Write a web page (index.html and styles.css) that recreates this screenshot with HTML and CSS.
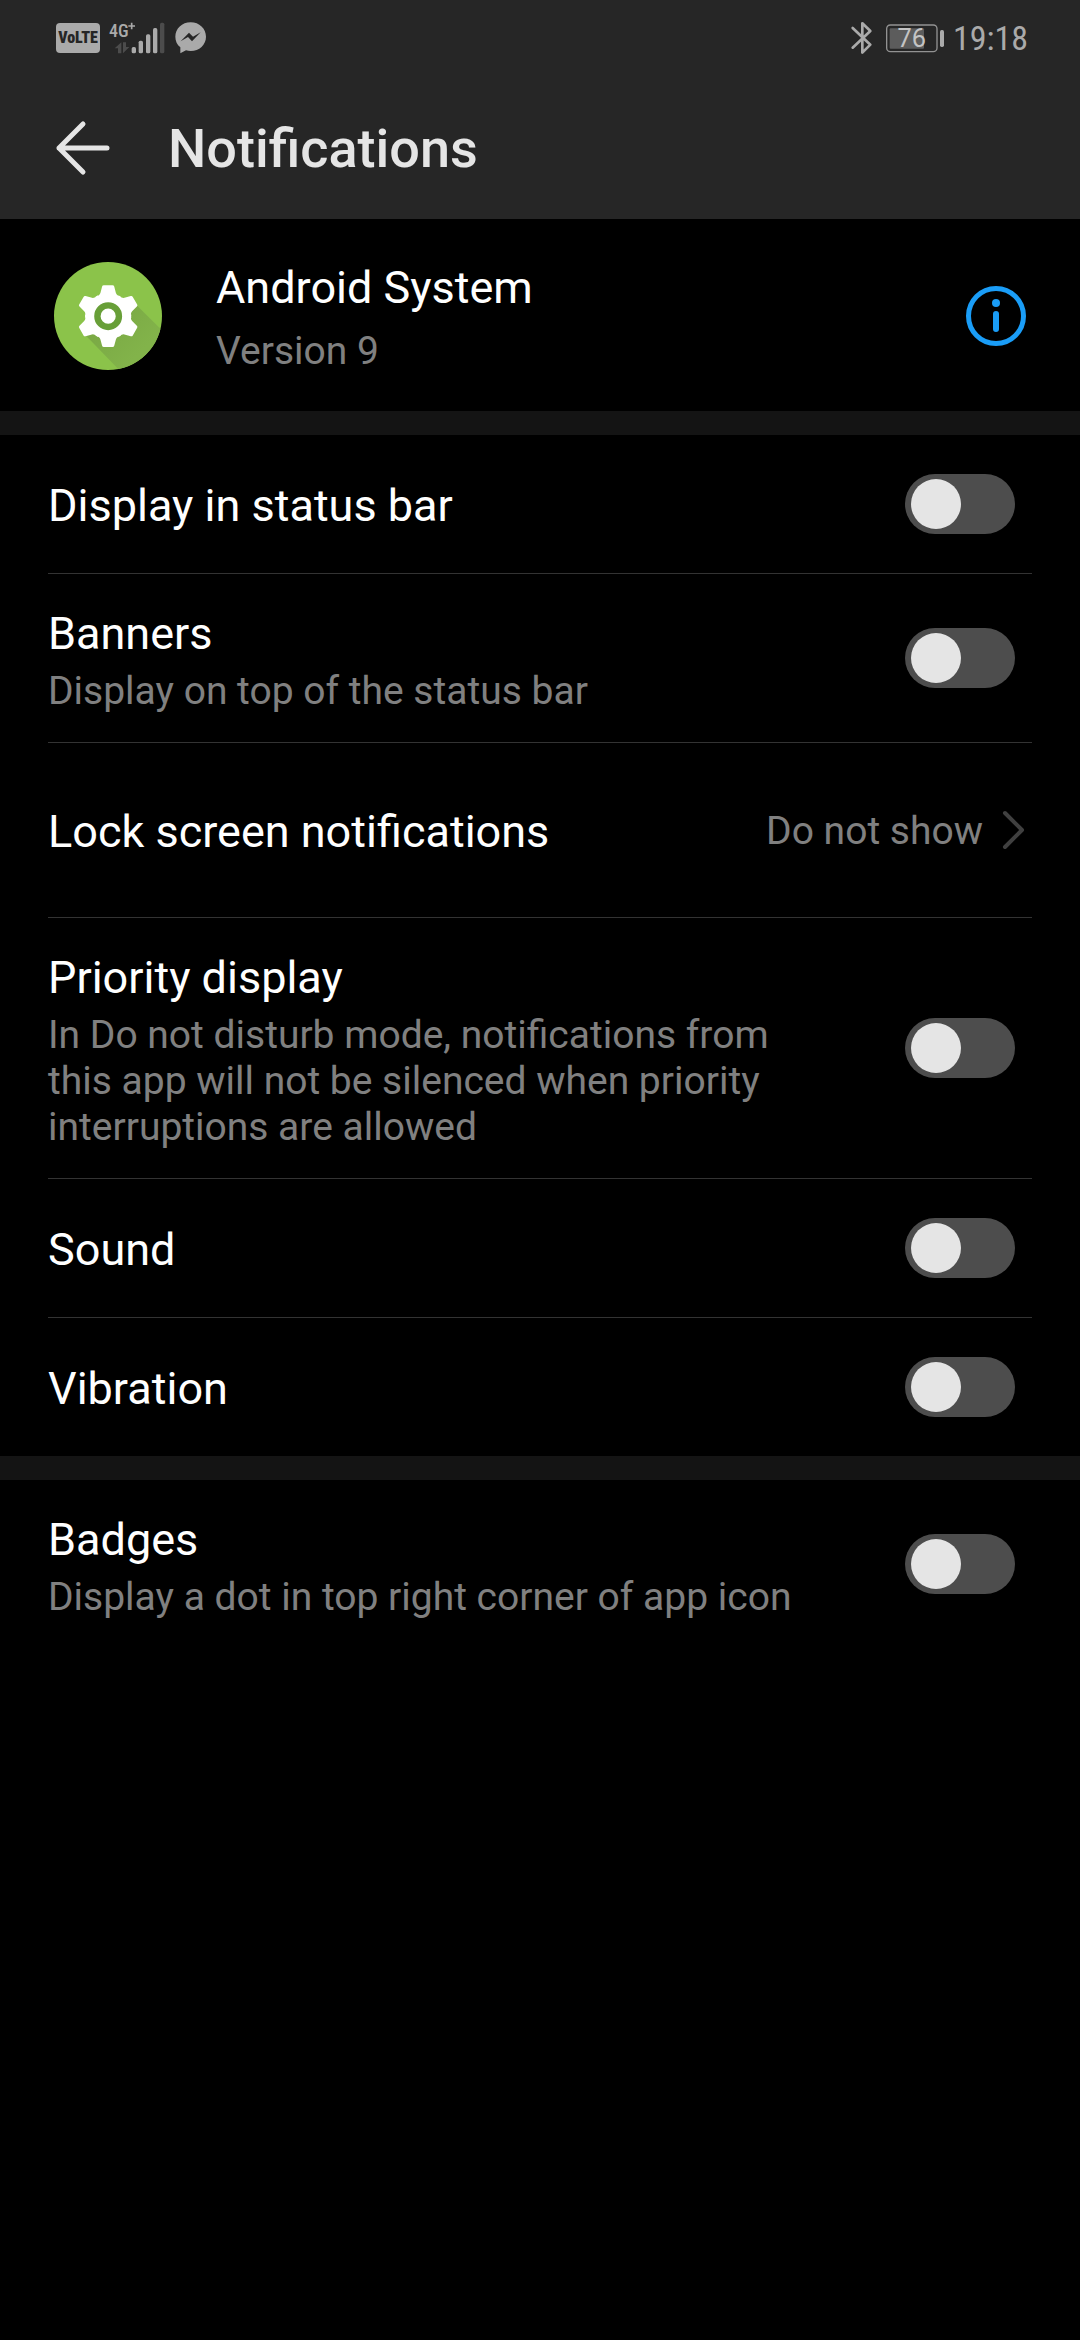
FILE: index.html
```html
<!DOCTYPE html>
<html lang="en">
<head>
<meta charset="utf-8">
<meta name="viewport" content="width=device-width">
<title>Notifications</title>
<link rel="stylesheet" href="styles.css">
</head>
<body>
<header class="top">
  <div class="status">
    <div class="status-left">
      <span class="volte">VoLTE</span>
      <svg class="signal" viewBox="204 54 171 114" aria-label="4G+ signal">
        <text class="network" x="207" y="107">4G</text>
        <path d="M265 75h20M275 65v20" stroke="#aaa" stroke-width="5"/>
        <g fill="#aaa">
          <rect x="275" y="138" width="13" height="19" rx="5"/>
          <rect x="296" y="119" width="13" height="38" rx="5"/>
          <rect x="318" y="100" width="13" height="57" rx="5"/>
          <rect x="339" y="81" width="13" height="76" rx="5"/>
        </g>
        <rect x="360" y="65" width="13" height="92" rx="5" fill="#4c4c4c"/>
        <path fill="#4c4c4c" d="M234 157V142H224L244 124V157ZM249 124H258V138H268L249 157Z"/>
      </svg>
      <svg class="messenger" viewBox="405 68 93 96" aria-label="Messenger">
        <path fill="#aaa" d="M452 69c-26 0-46 19-46 43 0 13 5 24 15 32v18l17-9c5 1 9 2 14 2 26 0 46-19 46-43s-20-43-46-43z"/>
        <path fill="#262626" d="M422 126l25-26 12 12 23-13-26 27-12-13z"/>
      </svg>
    </div>
    <div class="status-right">
      <svg class="bluetooth" viewBox="60 60 63 102" aria-label="Bluetooth">
        <path fill="none" stroke="#aaa" stroke-width="8" stroke-linecap="round" stroke-linejoin="round" d="M65 81l53 50-24 24V67l24 23-53 50"/>
      </svg>
      <svg class="battery" viewBox="165 63 174 96" aria-label="Battery 76 percent">
        <rect x="167" y="72" width="151" height="80" rx="11" fill="none" stroke="#929292" stroke-width="4"/>
        <rect x="176" y="82" width="103" height="61" rx="3" fill="#5c5c5c"/>
        <rect x="327" y="87" width="12" height="51" rx="5" fill="#aaa"/>
        <text class="charge" x="242" y="138">76</text>
      </svg>
      <time class="clock">19:18</time>
    </div>
  </div>
  <div class="appbar">
    <button class="icon-button" type="button" aria-label="Back">
      <svg class="back" viewBox="0 0 54 54"><path d="M27 3L3 27l24 24M3 27h48"/></svg>
    </button>
    <h1 class="heading">Notifications</h1>
  </div>
</header>
<main>
  <section class="app">
    <svg class="app-icon" viewBox="44 64 321 321" aria-hidden="true">
      <defs>
        <clipPath id="disc"><circle cx="204.500" cy="224.500" r="160.500"/></clipPath>
        <linearGradient id="shade" gradientUnits="userSpaceOnUse" x1="215" y1="235" x2="305" y2="325">
          <stop offset="0" stop-color="#7baa45"/><stop offset="1" stop-color="#82b34a"/>
        </linearGradient>
        <path id="tooth" d="M-38-58Q-26-60-23-69L-18-88Q-17-92-13-92H13Q17-92 18-88L23-69Q26-60 38-58L0 0z"/>
      </defs>
      <circle cx="204.500" cy="224.500" r="160.500" fill="#8bc34a"/>
      <path clip-path="url(#disc)" fill="url(#shade)" d="M132 276L292 195 450 350V480H330z"/>
      <g transform="translate(205 225)" fill="#fff">
        <circle r="67"/>
        <use href="#tooth"/>
        <use href="#tooth" transform="rotate(60)"/>
        <use href="#tooth" transform="rotate(120)"/>
        <use href="#tooth" transform="rotate(180)"/>
        <use href="#tooth" transform="rotate(240)"/>
        <use href="#tooth" transform="rotate(300)"/>
        <circle r="32" fill="none" stroke="#689f38" stroke-width="19"/>
      </g>
    </svg>
    <div class="app-text">
      <h2 class="title">Android System</h2>
      <p class="note">Version 9</p>
    </div>
    <button class="icon-button" type="button" aria-label="App info">
      <svg class="info" viewBox="0 0 60 60"><circle cx="30" cy="30" r="27.500"/><path class="stem" d="M30 28v15"/><circle class="dot" cx="30" cy="17" r="4"/></svg>
    </button>
  </section>

  <section class="group">
    <label class="row">
      <span class="text"><span class="title">Display in status bar</span></span>
      <input class="switch" type="checkbox">
    </label>
    <label class="row row-detail">
      <span class="text"><span class="title">Banners</span><span class="note">Display on top of the status bar</span></span>
      <input class="switch" type="checkbox">
    </label>
    <button class="row row-link" type="button">
      <span class="text"><span class="title">Lock screen notifications</span></span>
      <span class="value">Do not show</span>
      <svg class="chevron" viewBox="0 0 22 38" aria-hidden="true"><path d="M2 2l17 17L2 36"/></svg>
    </button>
    <label class="row row-detail">
      <span class="text"><span class="title">Priority display</span><span class="note">In Do not disturb mode, notifications from this app will not be silenced when priority interruptions are allowed</span></span>
      <input class="switch" type="checkbox">
    </label>
    <label class="row">
      <span class="text"><span class="title">Sound</span></span>
      <input class="switch" type="checkbox">
    </label>
    <label class="row">
      <span class="text"><span class="title">Vibration</span></span>
      <input class="switch" type="checkbox">
    </label>
  </section>

  <section class="group">
    <label class="row row-detail">
      <span class="text"><span class="title">Badges</span><span class="note">Display a dot in top right corner of app icon</span></span>
      <input class="switch" type="checkbox">
    </label>
  </section>
</main>
</body>
</html>
```
FILE: styles.css
```css
* { box-sizing: border-box; }

body {
  margin: 0;
  min-height: 100vh;
  background: #000;
  color: #fff;
  font-family: Roboto, "Noto Sans", sans-serif;
}

button {
  border: 0;
  background: none;
  color: inherit;
  font: inherit;
  text-align: left;
}

svg { display: block; flex: none; overflow: visible; }

.top { background: #262626; }

.status {
  display: flex;
  justify-content: space-between;
  align-items: center;
  height: 76px;
  padding: 0 52px 0 56px;
}

.status-left, .status-right { display: flex; align-items: center; }

.volte {
  display: flex;
  align-items: center;
  justify-content: center;
  width: 44px;
  height: 30px;
  margin-right: 8px;
  border-radius: 4px;
  background: #aaa;
  color: #262626;
  font: 900 16px/30px "Roboto Condensed", "Liberation Sans Narrow", Roboto, sans-serif;
}

.signal { width: 57px; height: 38px; margin-right: 10px; }
.network { font: 500 54px "Roboto Condensed", "Liberation Sans Narrow", Roboto, sans-serif; fill: #aaa; }
.messenger { width: 31px; height: 32px; }
.bluetooth { width: 21px; height: 34px; margin-right: 14px; }
.battery { width: 58px; height: 32px; margin-right: 9px; }
.charge { font: 76px Roboto, sans-serif; fill: #c4c4c4; text-anchor: middle; }

.clock {
  color: #aaa;
  font: 34px/40px "Roboto Condensed", "Liberation Sans Narrow", Roboto, sans-serif;
}

.appbar {
  display: flex;
  align-items: center;
  gap: 58px;
  padding: 38px 56px;
}

.icon-button { padding: 0; }
.back { width: 54px; height: 54px; }
.back path { fill: none; stroke: #e5e5e5; stroke-width: 5; stroke-linecap: round; stroke-linejoin: round; }

.heading {
  margin: 0;
  padding-top: 3px;
  color: #e5e5e5;
  font-size: 54px;
  font-weight: 500;
  line-height: 64px;
}

.app {
  display: flex;
  align-items: center;
  padding: 38px 54px 37px;
}

.app-icon { width: 108px; height: 108px; margin-right: 54px; }
.app-text { display: grid; flex: 1; gap: 14px; padding-top: 4px; }

.title {
  margin: 0;
  font-size: 45px;
  font-weight: 400;
  line-height: 53px;
}

.note, .value {
  margin: 0;
  color: #808080;
  font-size: 39px;
  line-height: 46px;
}

.info { width: 60px; height: 60px; fill: none; stroke: #1a9df7; stroke-width: 5; stroke-linecap: round; }
.info .stem { stroke-width: 6; }
.info .dot { fill: #1a9df7; stroke: none; }

.group {
  padding: 0 48px;
  border-top: 24px solid #141414;
}

.row {
  display: flex;
  align-items: center;
  width: 100%;
  min-height: 138px;
  padding: 0 17px 0 0;
}

.row + .row { border-top: 1px solid #333; min-height: 139px; }
.text { display: grid; flex: 1; gap: 8px; max-width: 760px; padding-top: 2px; }
.row-detail .text { padding: 33px 0 28px; }
.group .row-link { min-height: 175px; padding-right: 7px; }
.value { padding-top: 2px; }
.chevron { width: 22px; height: 38px; margin-left: 20px; }
.chevron path { fill: none; stroke: #404040; stroke-width: 4; stroke-linecap: round; stroke-linejoin: round; }

.switch {
  display: flex;
  flex: none;
  align-items: center;
  appearance: none;
  width: 110px;
  height: 60px;
  margin: 0 0 0 auto;
  padding: 0 6px;
  border-radius: 30px;
  background: #4d4d4d;
}

.switch::before {
  content: "";
  width: 50px;
  height: 50px;
  border-radius: 50%;
  background: #e5e5e5;
}

.switch:checked { justify-content: flex-end; background: #1a9df7; }
```
